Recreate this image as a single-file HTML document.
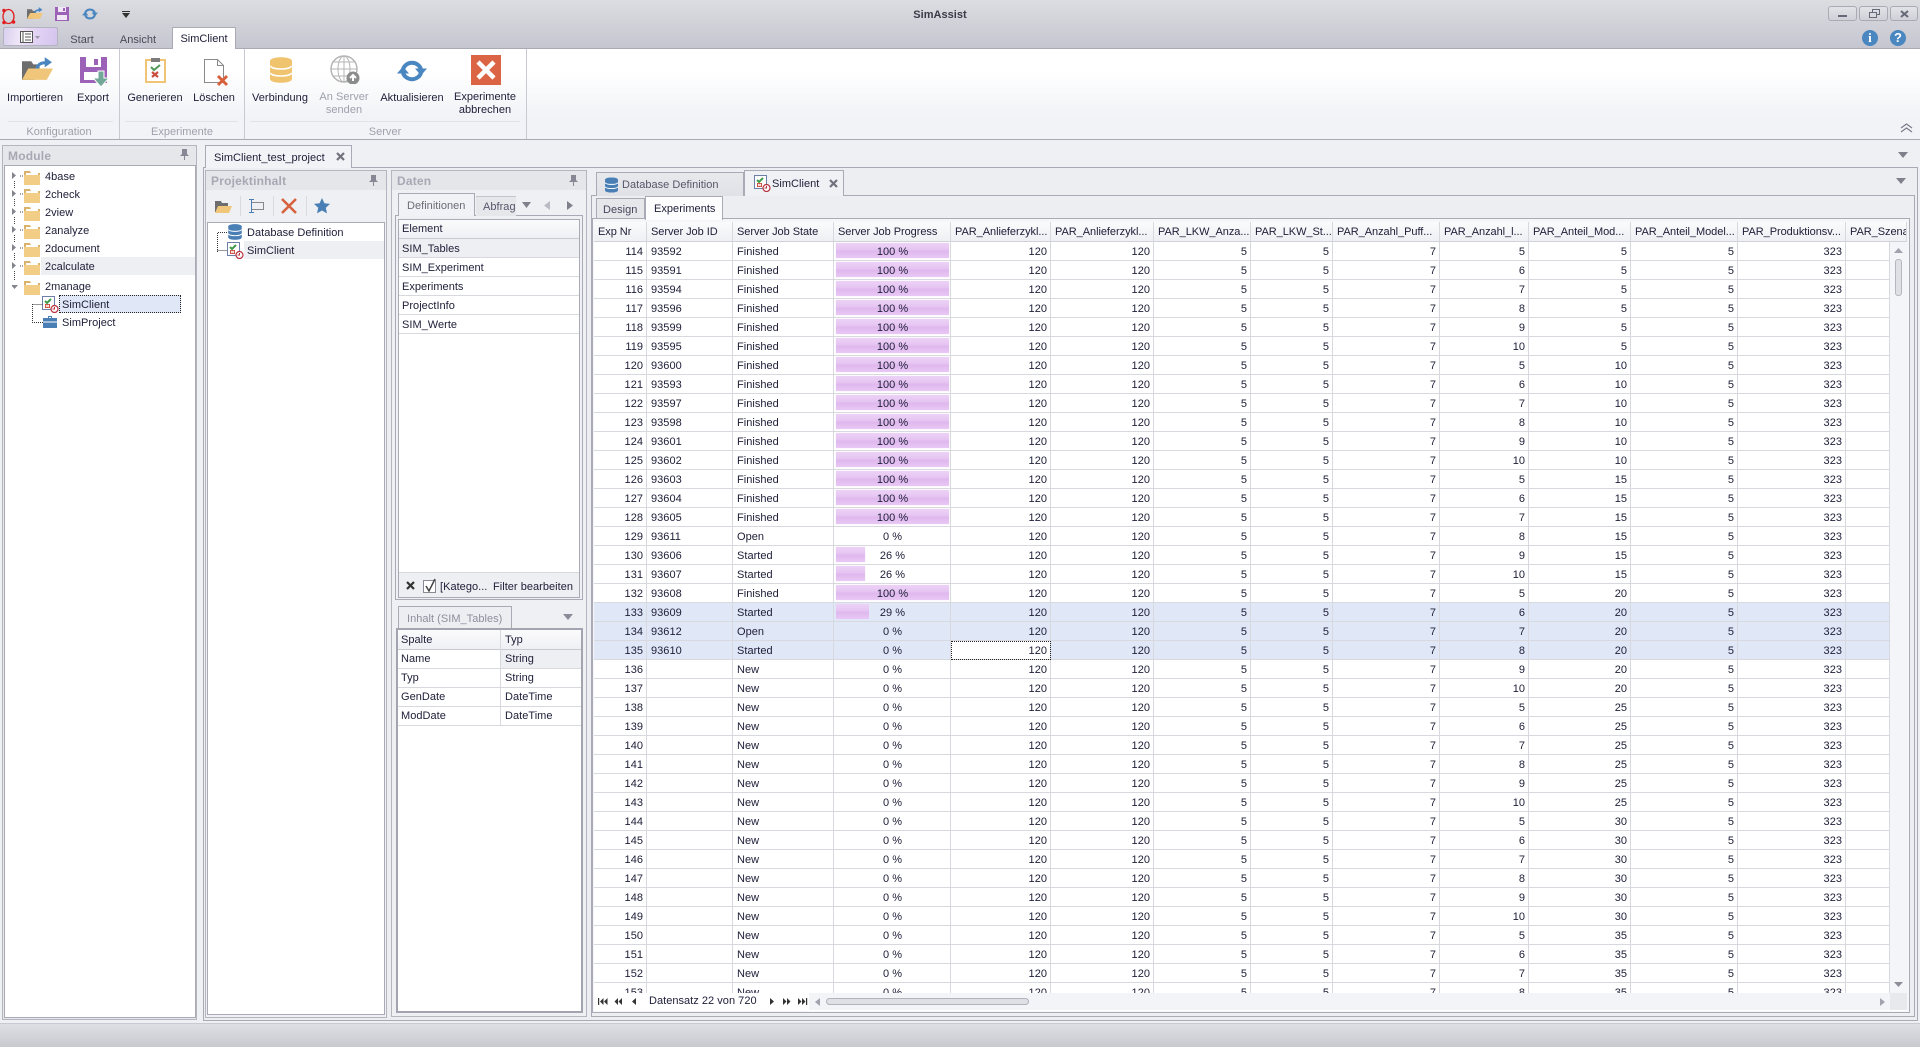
<!DOCTYPE html>
<html><head><meta charset="utf-8"><title>SimAssist</title>
<style>
html,body{margin:0;padding:0}
body{width:1920px;height:1047px;overflow:hidden;position:relative;background:#eef0f4;font:11px/14px "Liberation Sans",sans-serif;color:#20203a;letter-spacing:.03px}
.a,.t,svg{position:absolute}
.t{white-space:nowrap;margin-top:1px}
.c{transform:translateX(-50%);text-align:center}
.g{color:#9ea0ac}
.h{font-weight:bold;font-size:12px;color:#a6a8b4;letter-spacing:.2px;margin-top:0}
.bd{border:1px solid #a9aab6;box-sizing:border-box}
.line{position:absolute;background:#d8d9df}
table{border-collapse:separate;border-spacing:0;table-layout:fixed;position:absolute;left:0;top:0}
td{height:19px;box-sizing:border-box;border-right:1px solid #d8d9df;border-bottom:1px solid #d8d9df;padding:3px 3px 0 4px;vertical-align:top;text-align:right;white-space:nowrap;overflow:hidden;line-height:15px;background:#fff}
#bt td:nth-child(2),#bt td:nth-child(3){text-align:left}
#bt td:nth-child(4){text-align:center;position:relative}
#bt i{position:absolute;left:2px;top:1px;bottom:2px;right:1px;background:linear-gradient(#ecd2f6,#e6c4f2 45%,#dfb8ee 55%,#e8c8f4);box-shadow:0 0 1px #efdcf8}
#bt i.w6{right:auto;width:29px}
#bt i.w9{right:auto;width:33px}
#bt b{position:relative;font-weight:normal}
#bt tr.s td{background:#e0e8f8}
#ht td{height:20px;text-align:left;background:linear-gradient(#fbfbfc,#eff0f4);border-bottom:1px solid #d0d1d9;line-height:17px;padding:2px 2px 0 4px;letter-spacing:-.05px}
.tab{position:absolute;box-sizing:border-box;border:1px solid #a9aab6;border-bottom:0;background:linear-gradient(#f6f7f9,#eceef2)}
</style></head><body>

<svg width="0" height="0" style="left:0;top:0"><defs>
<symbol id="folder" viewBox="0 0 16 16"><path d="M0 2h6l1 2h9v11H0z" fill="#d9b36c"/><path d="M2 4h12v3H2z" fill="#fff"/><path d="M0 6h16v10H0z" fill="#f2cd85"/></symbol>
<symbol id="sim" viewBox="0 0 17 17"><rect x=".5" y=".5" width="12" height="13" fill="#fff" stroke="#6d7ea8"/><path d="M3 5l2 2 4-4" fill="none" stroke="#3f9a4a" stroke-width="2"/><path d="M3 8h5v4H3z" fill="#cc4a3a"/><path d="M4 9l3 2M7 9l-3 2" stroke="#fff"/><circle cx="12.5" cy="13" r="3.5" fill="#fff" stroke="#b8333f" stroke-width="1.2"/><path d="M12.5 11v2h-2" fill="none" stroke="#b8333f"/></symbol>
<symbol id="db" viewBox="0 0 22 26"><path d="M0 4c0-5 22-5 22 0v18c0 5-22 5-22 0z" fill="currentColor"/><path d="M0 9c3 4 19 4 22 0M0 16c3 4 19 4 22 0" fill="none" stroke="#fff" stroke-width="1.6"/></symbol>
<symbol id="ref" viewBox="0 0 30 24"><path d="M6 10A9.6 9.6 0 0 1 24 10M24 14A9.6 9.6 0 0 1 6 14" fill="none" stroke="#4a86c0" stroke-width="4"/><path d="M18 9.500h12l-6 7zM0 14.500h12l-6-7z" fill="#4a86c0"/></symbol>
</defs></svg>

<!-- title bar -->
<div class="a" style="left:0;top:0;width:1920px;height:48px;background:linear-gradient(#dcdde1,#c5c6d0)"></div>
<svg style="left:1px;top:8px" width="15" height="17" viewBox="0 0 15 17"><ellipse cx="7.500" cy="8.500" rx="5.500" ry="7" fill="none" stroke="#e02020" stroke-width="1.300"/><circle cx="3" cy="2.500" r="1.800" fill="#e02020"/><circle cx="3" cy="14.500" r="1.800" fill="#e02020"/><circle cx="12.500" cy="14" r="1.800" fill="#e02020"/></svg>
<svg style="left:27px;top:6px" width="16" height="15" viewBox="0 0 30 24"><path d="M0 4h9l2 3h6v4H0z M0 8h12v14H0z" fill="#6e6e6e"/><path d="M6 11h24l-6 11H0z" fill="#f0c67a"/><path d="M13 11c1-5 5-7 9-7V0l7 5-7 5V7c-3 0-5 1-6 4z" fill="#4a86c0"/></svg>
<svg style="left:55px;top:7px" width="14" height="14" viewBox="0 0 14 14"><path d="M0 0h14v14H0z" fill="#9b62b8"/><path d="M3 0h8v5H3zM2 8h10v5H2z" fill="#f0e8f4"/><path d="M8 1h2v3H8z" fill="#9b62b8"/></svg>
<svg style="left:82px;top:7px" width="16" height="14"><use href="#ref"/></svg>
<svg style="left:122px;top:11px" width="8" height="7" viewBox="0 0 8 7"><path d="M0 0h8v1H0zM0 2h8L4 7z" fill="#333"/></svg>
<div class="t c" style="left:940px;top:7px;font-weight:bold;color:#3a3a48">SimAssist</div>

<!-- window buttons -->
<div class="a" style="left:1828px;top:6px;width:29px;height:15px;box-sizing:border-box;border:1px solid #a9aab4;border-radius:3px;background:linear-gradient(#e2e3e7,#d0d1d8)"><div class="a" style="left:9px;top:8px;width:9px;height:2px;background:#666a78"></div></div>
<div class="a" style="left:1859px;top:6px;width:29px;height:15px;box-sizing:border-box;border:1px solid #a9aab4;border-radius:3px;background:linear-gradient(#e2e3e7,#d0d1d8)"><div class="a bd" style="left:12px;top:2px;width:8px;height:6px;border:1.500px solid #666a78"></div><div class="a bd" style="left:9px;top:5px;width:8px;height:6px;border:1.500px solid #666a78;background:#d8d9df"></div></div>
<div class="a" style="left:1890px;top:6px;width:28px;height:15px;box-sizing:border-box;border:1px solid #a9aab4;border-radius:3px;background:linear-gradient(#e2e3e7,#d0d1d8)"><svg style="left:9px;top:3px" width="9" height="8"><path d="M1 1l7 6M8 1L1 7" stroke="#666a78" stroke-width="2"/></svg></div>
<div class="a" style="left:1862px;top:30px;width:16px;height:16px;border-radius:50%;background:#4a86c0;color:#fff;font:bold 13px/16px 'Liberation Serif',serif;text-align:center">i</div>
<div class="a" style="left:1890px;top:30px;width:16px;height:16px;border-radius:50%;background:#4a86c0;color:#fff;font:bold 13px/16px 'Liberation Sans',sans-serif;text-align:center">?</div>

<!-- ribbon tabs -->
<div class="a" style="left:3px;top:27px;width:55px;height:19px;box-sizing:border-box;border:1px solid #b3b4c0;border-radius:2px;background:linear-gradient(100deg,#d8d0ee,#efe6f8 30%,#e2d2f4 60%,#d4c4ee)"></div>
<svg style="left:20px;top:31px" width="20" height="12" viewBox="0 0 20 12"><rect x=".5" y=".5" width="12" height="11" fill="#fff" stroke="#555"/><path d="M3 0v12M5 3h6M5 6h6M5 9h6" stroke="#555"/><path d="M15 5h5l-2.500 3z" fill="#9a9aa8"/></svg>
<div class="t c" style="left:82px;top:32px;color:#4a4a58">Start</div>
<div class="t c" style="left:138px;top:32px;color:#4a4a58">Ansicht</div>
<div class="a" style="left:172px;top:27px;width:64px;height:22px;box-sizing:border-box;border:1px solid #a9aab4;border-bottom:0;background:#fff;z-index:3;text-align:center;line-height:22px;letter-spacing:0">SimClient</div>

<!-- ribbon -->
<div class="a" style="left:0;top:48px;width:1920px;height:92px;box-sizing:border-box;border-top:1px solid #a9aab4;border-bottom:1px solid #a9aab4;background:linear-gradient(#fff 25%,#f2f3f7 75%)"></div>
<div class="a" style="left:119px;top:49px;width:1px;height:90px;background:#c8c9d1"></div>
<div class="a" style="left:244px;top:49px;width:1px;height:90px;background:#c8c9d1"></div>
<div class="a" style="left:526px;top:49px;width:1px;height:90px;background:#c8c9d1"></div>
<div class="line" style="left:8px;top:121px;width:105px;height:1px;background:#e2e3e8"></div>
<div class="line" style="left:125px;top:121px;width:113px;height:1px;background:#e2e3e8"></div>
<div class="line" style="left:250px;top:121px;width:270px;height:1px;background:#e2e3e8"></div>

<svg style="left:22px;top:57px" width="31" height="25" viewBox="0 0 30 24"><path d="M0 4h9l2 3h6v4H0z M0 8h12v14H0z" fill="#6e6e6e"/><path d="M6 11h24l-6 11H0z" fill="#f0c67a"/><path d="M13 11c1-5 5-7 9-7V0l7 5-7 5V7c-3 0-5 1-6 4z" fill="#4a86c0"/></svg>
<svg style="left:80px;top:57px" width="30" height="30" viewBox="0 0 30 30"><path d="M0 0h27v26H0z" fill="#9b62b8"/><path d="M6 0h15v10H6zM4 15h19v8H4z" fill="#fff"/><path d="M14 2h4v6h-4z" fill="#9b62b8"/><path d="M18 14h6v7h5l-8 9-8-9h5z" fill="#72a898" stroke="#fff"/></svg>
<svg style="left:145px;top:57px" width="21" height="26" viewBox="0 0 21 26"><rect x="1" y="3" width="19" height="22" fill="#fff" stroke="#efc477" stroke-width="2"/><path d="M6 1h9v4H6z" fill="#7c7c7c"/><path d="M6 10l3 3 6-5" fill="none" stroke="#4f9a5a" stroke-width="2"/><path d="M7 15l6 5M13 15l-6 5" stroke="#cc5040" stroke-width="2.200"/></svg>
<svg style="left:204px;top:59px" width="25" height="28" viewBox="0 0 25 28"><path d="M.5.5h13l6 6v17H.5z" fill="#fff" stroke="#8a8a8a"/><path d="M13.500.5v6h6" fill="none" stroke="#8a8a8a"/><path d="M14 17l9 9M23 17l-9 9" stroke="#d8623f" stroke-width="3"/></svg>
<svg style="left:270px;top:57px;color:#f0c36e" width="22" height="26"><use href="#db"/></svg>
<svg style="left:330px;top:55px" width="30" height="29" viewBox="0 0 30 29"><circle cx="14" cy="14" r="13" fill="#fff" stroke="#b5b5b5" stroke-width="1.500"/><ellipse cx="14" cy="14" rx="6" ry="13" fill="none" stroke="#b5b5b5"/><path d="M1 14h26M3 7h22M3 21h22M14 1v26" stroke="#b5b5b5"/><circle cx="23" cy="23" r="6.500" fill="#8c8c8c"/><path d="M23 26v-5M20 23l3-3 3 3" fill="none" stroke="#fff" stroke-width="2"/></svg>
<svg style="left:397px;top:59px" width="30" height="24"><use href="#ref"/></svg>
<svg style="left:471px;top:55px" width="30" height="30" viewBox="0 0 30 30"><path d="M0 0h30v30H0z" fill="#da6444"/><path d="M7 7l16 16M23 7L7 23" stroke="#fff" stroke-width="4.500"/></svg>

<div class="t c" style="left:35px;top:90px">Importieren</div>
<div class="t c" style="left:93px;top:90px">Export</div>
<div class="t c" style="left:155px;top:90px">Generieren</div>
<div class="t c" style="left:214px;top:90px">Löschen</div>
<div class="t c" style="left:280px;top:90px">Verbindung</div>
<div class="t c g" style="left:344px;top:90px;line-height:13px">An Server<br>senden</div>
<div class="t c" style="left:412px;top:90px">Aktualisieren</div>
<div class="t c" style="left:485px;top:90px;line-height:13px">Experimente<br>abbrechen</div>
<div class="t c g" style="left:59px;top:124px">Konfiguration</div>
<div class="t c g" style="left:182px;top:124px">Experimente</div>
<div class="t c g" style="left:385px;top:124px">Server</div>
<svg style="left:1900px;top:123px" width="13" height="10" viewBox="0 0 13 10"><path d="M1 5l5.500-4L12 5M1 9l5.500-4L12 9" fill="none" stroke="#7a7c8a" stroke-width="1.200"/></svg>

<!-- Module panel -->
<div class="a" style="left:2px;top:145px;width:195px;height:875px;box-sizing:border-box;border:1px solid #b4b5bf;background:#e6e7eb"></div>
<div class="a bd" style="left:4px;top:165px;width:192px;height:853px;background:#fff"></div>
<div class="t h" style="left:8px;top:149px">Module</div>
<svg style="left:180px;top:149px" width="9" height="11" viewBox="0 0 9 11"><path d="M2 0h5v5l2 2H5v4H4V7H0l2-2z" fill="#868894"/></svg>
<div class="a" style="left:41px;top:257px;width:154px;height:18px;background:#eeeff2"></div>
<div class="a" style="left:59px;top:295px;width:122px;height:18px;box-sizing:border-box;border:1px dotted #222;background:#e0e8f8"></div>
<svg style="left:12px;top:172px" width="12" height="120" viewBox="0 0 12 120"><path d="M0 0l4 3.500L0 7zM0 18l4 3.500L0 25zM0 36l4 3.500L0 43zM0 54l4 3.500L0 61zM0 72l4 3.500L0 79zM0 90l4 3.500L0 97z" fill="#82848e"/><path d="M-1 113h7l-3.500 4z" fill="#82848e"/><path d="M2.500 9v7M2.500 27v7M2.500 45v7M2.500 63v7M2.500 81v7M2.500 99v9M8 4h4M8 22h4M8 40h4M8 58h4M8 76h4M8 94h4" stroke="#444" stroke-dasharray="1 1"/></svg>
<svg style="left:24px;top:169px" width="16" height="16"><use href="#folder"/></svg>
<svg style="left:24px;top:187px" width="16" height="16"><use href="#folder"/></svg>
<svg style="left:24px;top:205px" width="16" height="16"><use href="#folder"/></svg>
<svg style="left:24px;top:223px" width="16" height="16"><use href="#folder"/></svg>
<svg style="left:24px;top:241px" width="16" height="16"><use href="#folder"/></svg>
<svg style="left:24px;top:259px" width="16" height="16"><use href="#folder"/></svg>
<svg style="left:24px;top:279px" width="16" height="16"><use href="#folder"/></svg>
<svg style="left:42px;top:296px" width="17" height="17"><use href="#sim"/></svg>
<svg style="left:43px;top:316px" width="14" height="12" viewBox="0 0 14 12"><path d="M5 2V0h4v2h5v10H0V2zM6 1v1h2V1z" fill="#4a7fb5"/><path d="M0 6h14" stroke="#fff"/></svg>
<svg style="left:32px;top:304px" width="11" height="20"><path d="M.5 0v18.500H11M.5 .5H11" fill="none" stroke="#333" stroke-dasharray="1 1"/></svg>
<div class="t" style="left:45px;top:169px">4base</div>
<div class="t" style="left:45px;top:187px">2check</div>
<div class="t" style="left:45px;top:205px">2view</div>
<div class="t" style="left:45px;top:223px">2analyze</div>
<div class="t" style="left:45px;top:241px">2document</div>
<div class="t" style="left:45px;top:259px">2calculate</div>
<div class="t" style="left:45px;top:279px">2manage</div>
<div class="t" style="left:62px;top:297px">SimClient</div>
<div class="t" style="left:62px;top:315px">SimProject</div>

<!-- document area -->
<div class="a" style="left:203px;top:167px;width:1715px;height:854px;box-sizing:border-box;border:1px solid #a9aab6;background:#eceef2"></div>
<div class="tab" style="left:205px;top:145px;width:147px;height:23px;background:#f2f3f6;border-bottom:0"></div>
<div class="t" style="left:214px;top:150px">SimClient_test_project</div>
<svg style="left:336px;top:152px" width="9" height="9"><path d="M1 1l7 7M8 1L1 8" stroke="#70727e" stroke-width="2.200"/></svg>

<!-- Projektinhalt -->
<div class="a" style="left:205px;top:170px;width:182px;height:848px;box-sizing:border-box;border:1px solid #b4b5bf;background:#eef0f3"></div>
<div class="a" style="left:206px;top:171px;width:180px;height:19px;background:#e5e6ea"></div>
<div class="t h" style="left:211px;top:174px">Projektinhalt</div>
<svg style="left:369px;top:175px" width="9" height="11" viewBox="0 0 9 11"><path d="M2 0h5v5l2 2H5v4H4V7H0l2-2z" fill="#868894"/></svg>
<div class="a bd" style="left:207px;top:222px;width:178px;height:793px;background:#fff"></div>
<svg style="left:215px;top:200px" width="17" height="13" viewBox="0 0 17 13"><path d="M0 1h6l1 2h6v3H0z M0 4h3v8H0z" fill="#6e6e6e"/><path d="M3 6h14l-3 7H0z" fill="#f0c67a"/></svg>
<svg style="left:248px;top:199px" width="16" height="14" viewBox="0 0 16 14"><rect x="3.500" y="3.500" width="12" height="7" fill="none" stroke="#888"/><path d="M3.500 0v14M1 .5h5M1 13.500h5" stroke="#4a7fb5"/></svg>
<svg style="left:281px;top:198px" width="16" height="16"><path d="M1 1l14 14M15 1L1 15" stroke="#d8623f" stroke-width="2.600"/></svg>
<svg style="left:314px;top:198px" width="16" height="16" viewBox="0 0 16 16"><path d="M8 0l2.400 5.300 5.600.6-4.200 3.800 1.200 5.700L8 12.500l-5 2.900 1.200-5.700L0 5.900l5.600-.6z" fill="#4a7fb5"/></svg>
<div class="a" style="left:240px;top:196px;width:1px;height:20px;background:#d9dae0"></div>
<div class="a" style="left:273px;top:196px;width:1px;height:20px;background:#d9dae0"></div>
<div class="a" style="left:306px;top:196px;width:1px;height:20px;background:#d9dae0"></div>
<div class="a" style="left:244px;top:241px;width:140px;height:18px;background:#eeeff2"></div>
<svg style="left:217px;top:232px" width="11" height="20"><path d="M.5 20V.5H11M.5 18.500H11" fill="none" stroke="#333" stroke-dasharray="1 1"/></svg>
<svg style="left:228px;top:224px;color:#4a7fb5" width="14" height="16"><use href="#db"/></svg>
<svg style="left:227px;top:242px" width="17" height="17"><use href="#sim"/></svg>
<div class="t" style="left:247px;top:225px">Database Definition</div>
<div class="t" style="left:247px;top:243px">SimClient</div>

<!-- Daten -->
<div class="a" style="left:391px;top:170px;width:196px;height:847px;box-sizing:border-box;border:1px solid #b4b5bf;background:#eef0f3"></div>
<div class="a" style="left:392px;top:171px;width:194px;height:19px;background:#e5e6ea"></div>
<div class="t h" style="left:397px;top:174px">Daten</div>
<svg style="left:569px;top:175px" width="9" height="11" viewBox="0 0 9 11"><path d="M2 0h5v5l2 2H5v4H4V7H0l2-2z" fill="#868894"/></svg>
<div class="a bd" style="left:395px;top:215px;width:188px;height:385px;background:#eef0f3"></div>
<div class="tab" style="left:398px;top:193px;width:77px;height:23px;background:#f1f2f5"></div>
<div class="t g" style="left:407px;top:198px;color:#6a6c78">Definitionen</div>
<div class="a" style="left:476px;top:196px;width:40px;height:19px;border-top:1px solid #c4c5cd;background:#e6e7eb;overflow:hidden"><div class="t" style="left:7px;top:2px;color:#55566a">Abfragen</div></div>
<svg style="left:522px;top:202px" width="9" height="6"><path d="M0 0h9L4.500 6z" fill="#7e808c"/></svg>
<svg style="left:544px;top:201px" width="6" height="9"><path d="M6 0v9L0 4.500z" fill="#b8bac4"/></svg>
<svg style="left:567px;top:201px" width="6" height="9"><path d="M0 0v9l6-4.500z" fill="#7e808c"/></svg>
<div class="a bd" style="left:398px;top:219px;width:182px;height:379px;background:#fff"></div>
<div class="a" style="left:399px;top:220px;width:180px;height:18px;background:linear-gradient(#fbfbfc,#eff0f4)"></div>
<div class="a" style="left:399px;top:238px;width:180px;height:19px;background:#eeeff2"></div>
<div class="line" style="left:399px;top:238px;width:180px;height:1px;background:#c8c9d1"></div>
<div class="line" style="left:399px;top:257px;width:180px;height:1px"></div>
<div class="line" style="left:399px;top:276px;width:180px;height:1px"></div>
<div class="line" style="left:399px;top:295px;width:180px;height:1px"></div>
<div class="line" style="left:399px;top:314px;width:180px;height:1px"></div>
<div class="line" style="left:399px;top:333px;width:180px;height:1px"></div>
<div class="t" style="left:402px;top:221px">Element</div>
<div class="t" style="left:402px;top:241px">SIM_Tables</div>
<div class="t" style="left:402px;top:260px">SIM_Experiment</div>
<div class="t" style="left:402px;top:279px">Experiments</div>
<div class="t" style="left:402px;top:298px">ProjectInfo</div>
<div class="t" style="left:402px;top:317px">SIM_Werte</div>
<div class="a" style="left:399px;top:572px;width:180px;height:25px;background:#eeeff2;border-top:1px solid #d8d9df;box-sizing:border-box"></div>
<svg style="left:406px;top:581px" width="9" height="9"><path d="M1 1l7 7M8 1L1 8" stroke="#333" stroke-width="2.200"/></svg>
<svg style="left:423px;top:578px" width="14" height="16" viewBox="0 0 14 16"><rect x=".5" y="2.500" width="12" height="12" fill="#fff" stroke="#8a8a94"/><path d="M3 8l3 5 6-12" fill="none" stroke="#444" stroke-width="1.500"/></svg>
<div class="t" style="left:440px;top:579px">[Katego...</div>
<div class="t" style="left:493px;top:579px">Filter bearbeiten</div>

<div class="tab" style="left:398px;top:606px;width:114px;height:23px;background:#eceef2"></div>
<div class="t g" style="left:407px;top:611px;color:#8d8f9c">Inhalt (SIM_Tables)</div>
<svg style="left:563px;top:614px" width="10" height="6"><path d="M0 0h10L5 6z" fill="#8a8c98"/></svg>
<div class="a" style="left:396px;top:628px;width:187px;height:385px;box-sizing:border-box;border:2.500px solid #a3a4b0;background:#fff"></div>
<div class="a" style="left:398px;top:630px;width:183px;height:19px;background:linear-gradient(#fbfbfc,#eff0f4)"></div>
<div class="a" style="left:500px;top:649px;width:81px;height:19px;background:#eeeff2"></div>
<div class="line" style="left:398px;top:649px;width:183px;height:1px;background:#c8c9d1"></div>
<div class="line" style="left:398px;top:668px;width:183px;height:1px"></div>
<div class="line" style="left:398px;top:687px;width:183px;height:1px"></div>
<div class="line" style="left:398px;top:706px;width:183px;height:1px"></div>
<div class="line" style="left:398px;top:725px;width:183px;height:1px"></div>
<div class="line" style="left:500px;top:630px;width:1px;height:95px"></div>
<div class="t" style="left:401px;top:632px">Spalte</div>
<div class="t" style="left:505px;top:632px">Typ</div>
<div class="t" style="left:401px;top:651px">Name</div>
<div class="t" style="left:505px;top:651px">String</div>
<div class="t" style="left:401px;top:670px">Typ</div>
<div class="t" style="left:505px;top:670px">String</div>
<div class="t" style="left:401px;top:689px">GenDate</div>
<div class="t" style="left:505px;top:689px">DateTime</div>
<div class="t" style="left:401px;top:708px">ModDate</div>
<div class="t" style="left:505px;top:708px">DateTime</div>

<!-- right doc -->
<div class="a" style="left:591px;top:195px;width:1324px;height:822px;box-sizing:border-box;border:1px solid #a9aab6;background:#eceef2"></div>
<div class="tab" style="left:596px;top:172px;width:148px;height:24px;background:linear-gradient(#e8e9ed,#e0e1e6)"></div>
<svg style="left:605px;top:177px;color:#4a7fb5" width="13" height="16"><use href="#db"/></svg>
<div class="t" style="left:622px;top:177px;color:#555668">Database Definition</div>
<div class="tab" style="left:744px;top:170px;width:100px;height:26px;background:#f0f1f4"></div>
<svg style="left:754px;top:175px" width="17" height="17"><use href="#sim"/></svg>
<div class="t" style="left:772px;top:176px">SimClient</div>
<svg style="left:829px;top:179px" width="9" height="9"><path d="M1 1l7 7M8 1L1 8" stroke="#70727e" stroke-width="2.200"/></svg>
<svg style="left:1896px;top:178px" width="10" height="6"><path d="M0 0h10L5 6z" fill="#7e808c"/></svg>
<svg style="left:1898px;top:152px" width="10" height="6"><path d="M0 0h10L5 6z" fill="#7e808c"/></svg>

<div class="tab" style="left:596px;top:198px;width:49px;height:21px;background:#e6e7eb"></div>
<div class="t" style="left:603px;top:202px;color:#45465a">Design</div>
<div class="tab" style="left:645px;top:196px;width:78px;height:24px;background:#fdfdfe;z-index:2"></div>
<div class="t" style="left:654px;top:201px;z-index:3">Experiments</div>

<!-- main grid -->
<div class="a" style="left:592px;top:218px;width:1318px;height:795px;box-sizing:border-box;border:1px solid #a9aab6;background:#f5f6f8"></div>
<div class="a" style="left:594px;top:222px;width:1313px;height:20px;overflow:hidden">
<table id="ht" style="width:1313px"><colgroup><col style="width:53px"><col style="width:86px"><col style="width:101px"><col style="width:117px"><col style="width:100px"><col style="width:103px"><col style="width:97px"><col style="width:82px"><col style="width:107px"><col style="width:89px"><col style="width:102px"><col style="width:107px"><col style="width:108px"><col style="width:61px"></colgroup>
<tr><td>Exp Nr<td>Server Job ID<td>Server Job State<td>Server Job Progress<td>PAR_Anlieferzykl...<td>PAR_Anlieferzykl...<td>PAR_LKW_Anza...<td>PAR_LKW_St...<td>PAR_Anzahl_Puff...<td>PAR_Anzahl_l...<td>PAR_Anteil_Mod...<td>PAR_Anteil_Model...<td>PAR_Produktionsv...<td>PAR_Szenar</tr>
</table></div>
<div class="a" style="left:594px;top:242px;width:1296px;height:751px;overflow:hidden;background:#fff">
<table id="bt" style="width:1296px"><colgroup><col style="width:53px"><col style="width:86px"><col style="width:101px"><col style="width:117px"><col style="width:100px"><col style="width:103px"><col style="width:97px"><col style="width:82px"><col style="width:107px"><col style="width:89px"><col style="width:102px"><col style="width:107px"><col style="width:108px"><col style="width:44px"></colgroup>
<tr><td>114<td>93592<td>Finished<td><i></i><b>100 %</b><td>120<td>120<td>5<td>5<td>7<td>5<td>5<td>5<td>323<td></tr>
<tr><td>115<td>93591<td>Finished<td><i></i><b>100 %</b><td>120<td>120<td>5<td>5<td>7<td>6<td>5<td>5<td>323<td></tr>
<tr><td>116<td>93594<td>Finished<td><i></i><b>100 %</b><td>120<td>120<td>5<td>5<td>7<td>7<td>5<td>5<td>323<td></tr>
<tr><td>117<td>93596<td>Finished<td><i></i><b>100 %</b><td>120<td>120<td>5<td>5<td>7<td>8<td>5<td>5<td>323<td></tr>
<tr><td>118<td>93599<td>Finished<td><i></i><b>100 %</b><td>120<td>120<td>5<td>5<td>7<td>9<td>5<td>5<td>323<td></tr>
<tr><td>119<td>93595<td>Finished<td><i></i><b>100 %</b><td>120<td>120<td>5<td>5<td>7<td>10<td>5<td>5<td>323<td></tr>
<tr><td>120<td>93600<td>Finished<td><i></i><b>100 %</b><td>120<td>120<td>5<td>5<td>7<td>5<td>10<td>5<td>323<td></tr>
<tr><td>121<td>93593<td>Finished<td><i></i><b>100 %</b><td>120<td>120<td>5<td>5<td>7<td>6<td>10<td>5<td>323<td></tr>
<tr><td>122<td>93597<td>Finished<td><i></i><b>100 %</b><td>120<td>120<td>5<td>5<td>7<td>7<td>10<td>5<td>323<td></tr>
<tr><td>123<td>93598<td>Finished<td><i></i><b>100 %</b><td>120<td>120<td>5<td>5<td>7<td>8<td>10<td>5<td>323<td></tr>
<tr><td>124<td>93601<td>Finished<td><i></i><b>100 %</b><td>120<td>120<td>5<td>5<td>7<td>9<td>10<td>5<td>323<td></tr>
<tr><td>125<td>93602<td>Finished<td><i></i><b>100 %</b><td>120<td>120<td>5<td>5<td>7<td>10<td>10<td>5<td>323<td></tr>
<tr><td>126<td>93603<td>Finished<td><i></i><b>100 %</b><td>120<td>120<td>5<td>5<td>7<td>5<td>15<td>5<td>323<td></tr>
<tr><td>127<td>93604<td>Finished<td><i></i><b>100 %</b><td>120<td>120<td>5<td>5<td>7<td>6<td>15<td>5<td>323<td></tr>
<tr><td>128<td>93605<td>Finished<td><i></i><b>100 %</b><td>120<td>120<td>5<td>5<td>7<td>7<td>15<td>5<td>323<td></tr>
<tr><td>129<td>93611<td>Open<td>0 %<td>120<td>120<td>5<td>5<td>7<td>8<td>15<td>5<td>323<td></tr>
<tr><td>130<td>93606<td>Started<td><i class="w6"></i><b>26 %</b><td>120<td>120<td>5<td>5<td>7<td>9<td>15<td>5<td>323<td></tr>
<tr><td>131<td>93607<td>Started<td><i class="w6"></i><b>26 %</b><td>120<td>120<td>5<td>5<td>7<td>10<td>15<td>5<td>323<td></tr>
<tr><td>132<td>93608<td>Finished<td><i></i><b>100 %</b><td>120<td>120<td>5<td>5<td>7<td>5<td>20<td>5<td>323<td></tr>
<tr class="s"><td>133<td>93609<td>Started<td><i class="w9"></i><b>29 %</b><td>120<td>120<td>5<td>5<td>7<td>6<td>20<td>5<td>323<td></tr>
<tr class="s"><td>134<td>93612<td>Open<td>0 %<td>120<td>120<td>5<td>5<td>7<td>7<td>20<td>5<td>323<td></tr>
<tr class="s"><td>135<td>93610<td>Started<td>0 %<td style="background:#fff;outline:1px dotted #222;outline-offset:-1px">120<td>120<td>5<td>5<td>7<td>8<td>20<td>5<td>323<td></tr>
<tr><td>136<td><td>New<td>0 %<td>120<td>120<td>5<td>5<td>7<td>9<td>20<td>5<td>323<td></tr>
<tr><td>137<td><td>New<td>0 %<td>120<td>120<td>5<td>5<td>7<td>10<td>20<td>5<td>323<td></tr>
<tr><td>138<td><td>New<td>0 %<td>120<td>120<td>5<td>5<td>7<td>5<td>25<td>5<td>323<td></tr>
<tr><td>139<td><td>New<td>0 %<td>120<td>120<td>5<td>5<td>7<td>6<td>25<td>5<td>323<td></tr>
<tr><td>140<td><td>New<td>0 %<td>120<td>120<td>5<td>5<td>7<td>7<td>25<td>5<td>323<td></tr>
<tr><td>141<td><td>New<td>0 %<td>120<td>120<td>5<td>5<td>7<td>8<td>25<td>5<td>323<td></tr>
<tr><td>142<td><td>New<td>0 %<td>120<td>120<td>5<td>5<td>7<td>9<td>25<td>5<td>323<td></tr>
<tr><td>143<td><td>New<td>0 %<td>120<td>120<td>5<td>5<td>7<td>10<td>25<td>5<td>323<td></tr>
<tr><td>144<td><td>New<td>0 %<td>120<td>120<td>5<td>5<td>7<td>5<td>30<td>5<td>323<td></tr>
<tr><td>145<td><td>New<td>0 %<td>120<td>120<td>5<td>5<td>7<td>6<td>30<td>5<td>323<td></tr>
<tr><td>146<td><td>New<td>0 %<td>120<td>120<td>5<td>5<td>7<td>7<td>30<td>5<td>323<td></tr>
<tr><td>147<td><td>New<td>0 %<td>120<td>120<td>5<td>5<td>7<td>8<td>30<td>5<td>323<td></tr>
<tr><td>148<td><td>New<td>0 %<td>120<td>120<td>5<td>5<td>7<td>9<td>30<td>5<td>323<td></tr>
<tr><td>149<td><td>New<td>0 %<td>120<td>120<td>5<td>5<td>7<td>10<td>30<td>5<td>323<td></tr>
<tr><td>150<td><td>New<td>0 %<td>120<td>120<td>5<td>5<td>7<td>5<td>35<td>5<td>323<td></tr>
<tr><td>151<td><td>New<td>0 %<td>120<td>120<td>5<td>5<td>7<td>6<td>35<td>5<td>323<td></tr>
<tr><td>152<td><td>New<td>0 %<td>120<td>120<td>5<td>5<td>7<td>7<td>35<td>5<td>323<td></tr>
<tr><td>153<td><td>New<td>0 %<td>120<td>120<td>5<td>5<td>7<td>8<td>35<td>5<td>323<td></tr>
</table></div>

<!-- vertical scrollbar -->
<div class="a" style="left:1890px;top:242px;width:17px;height:751px;background:#f4f5f8"></div>
<svg style="left:1894px;top:248px" width="9" height="5"><path d="M4.500 0L9 5H0z" fill="#a0a2ae"/></svg>
<div class="a" style="left:1895px;top:259px;width:7px;height:37px;box-sizing:border-box;border:1px solid #b4b6c0;border-radius:3px;background:#dfe0e6"></div>
<svg style="left:1894px;top:982px" width="9" height="5"><path d="M0 0h9L4.500 5z" fill="#8c8e9a"/></svg>

<!-- nav bar -->
<div class="a" style="left:594px;top:993px;width:1313px;height:18px;background:#fff"></div>
<div class="a" style="left:809px;top:993px;width:1081px;height:17px;background:#f3f4f7"></div>
<div class="a" style="left:1890px;top:993px;width:17px;height:17px;background:#e8e9ed"></div>
<svg style="left:590px;top:998px" width="225" height="7" viewBox="0 0 225 7"><path d="M8 0h1.200v7H8zM13.500 0v7L10 3.500zM17.500 0v7L14 3.500zM28 0v7L24.500 3.500zM32 0v7L28.500 3.500zM46 0v7L42 3.500zM180 0v7l4-3.500zM193 0v7l3.500-3.500zM197 0v7l3.500-3.500zM208 0v7l3.500-3.500zM212 0v7l3.500-3.500zM216 0h1.200v7H216z" fill="#333"/></svg>
<div class="t" style="left:649px;top:993px">Datensatz 22 von 720</div>
<svg style="left:815px;top:998px" width="5" height="8"><path d="M5 0v8L0 4z" fill="#a0a2ae"/></svg>
<div class="a" style="left:826px;top:998px;width:203px;height:7px;box-sizing:border-box;border:1px solid #b0b2bc;border-radius:4px;background:#dfe0e6"></div>
<svg style="left:1880px;top:998px" width="5" height="8"><path d="M0 0v8l5-4z" fill="#a0a2ae"/></svg>

<!-- status bar -->
<div class="a" style="left:0;top:1023px;width:1920px;height:24px;border-top:1px solid #c8c9d1;box-sizing:border-box;background:linear-gradient(#dedfe4,#c9cad0)"></div>
</body></html>
